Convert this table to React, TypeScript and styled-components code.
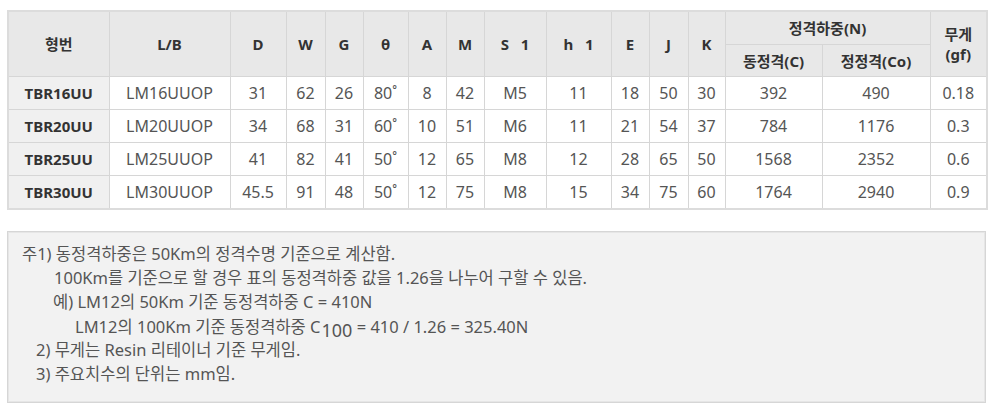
import React from "react";
import styled, { createGlobalStyle } from "styled-components";

const Global = createGlobalStyle`
  html, body { margin: 0; padding: 0; background: #fff; }
  body { font-family: "Noto Sans", "Noto Sans CJK KR", sans-serif; color: #444; }
`;

const Page = styled.div`
  padding: 10px 14px 0 7px;
  width: 979px;
  display: flex;
  flex-direction: column;
  gap: 21px;
`;

const Table = styled.table`
  width: 979px;
  border-collapse: collapse;
  table-layout: fixed;
  border: 2px solid #dcdcdc;
  font-size: 15px;
`;

const Th = styled.th<{ $h?: number }>`
  background: #e8e8e8;
  border: 1px solid #d6d6d6;
  font-weight: 700;
  color: #333;
  text-align: center;
  padding: 0;
  height: ${(p) => (p.$h ? p.$h : 31)}px;
  line-height: 20px;
  white-space: pre;
`;

const Td = styled.td<{ $head?: boolean }>`
  border: 1px solid #d6d6d6;
  text-align: center;
  padding: 0;
  height: 32px;
  line-height: 20px;
  font-size: ${(p) => (p.$head ? 15 : 16)}px;
  color: ${(p) => (p.$head ? "#333" : "#555")};
  font-weight: ${(p) => (p.$head ? 700 : 400)};
  background: ${(p) => (p.$head ? "#f0f0f0" : "#fff")};
`;

const Note = styled.div`
  box-sizing: border-box;
  width: 979px;
  height: 172px;
  background: #f2f2f2;
  border: 1px solid #d6d6d6;
  box-shadow: inset 0 0 0 1px #e6e6e6;
  padding: 10px 0 0 14px;
  font-size: 16.5px;
  color: #555;
`;

const Line = styled.div<{ $indent: number }>`
  padding-left: ${(p) => p.$indent}px;
  height: 24px;
  line-height: 24px;
  white-space: pre;
`;

const Sub = styled.span`
  font-size: 18px;
  position: relative;
  top: 4px;
  margin-left: 1px;
`;

const widths = [101, 121, 56, 39, 38, 45, 38, 38, 62, 65, 38, 39, 37, 97, 108, 57];

const rows = [
  ["TBR16UU", "LM16UUOP", "31", "62", "26", "80˚", "8", "42", "M5", "11", "18", "50", "30", "392", "490", "0.18"],
  ["TBR20UU", "LM20UUOP", "34", "68", "31", "60˚", "10", "51", "M6", "11", "21", "54", "37", "784", "1176", "0.3"],
  ["TBR25UU", "LM25UUOP", "41", "82", "41", "50˚", "12", "65", "M8", "12", "28", "65", "50", "1568", "2352", "0.6"],
  ["TBR30UU", "LM30UUOP", "45.5", "91", "48", "50˚", "12", "75", "M8", "15", "34", "75", "60", "1764", "2940", "0.9"],
];

const heads = ["형번", "L/B", "D", "W", "G", "θ", "A", "M", "S   1", "h   1", "E", "J", "K"];

export default function App() {
  return (
    <>
      <Global />
      <Page>
        <Table>
          <colgroup>
            {widths.map((w, i) => (
              <col key={i} style={{ width: w }} />
            ))}
          </colgroup>
          <thead>
            <tr>
              {heads.map((h) => (
                <Th key={h} rowSpan={2}>
                  {h}
                </Th>
              ))}
              <Th colSpan={2} $h={32}>정격하중(N)</Th>
              <Th rowSpan={2}>{"무게\n(gf)"}</Th>
            </tr>
            <tr>
              <Th $h={31}>동정격(C)</Th>
              <Th $h={31}>정정격(Co)</Th>
            </tr>
          </thead>
          <tbody>
            {rows.map((r) => (
              <tr key={r[0]}>
                {r.map((c, i) => (
                  <Td key={i} $head={i === 0}>
                    {c}
                  </Td>
                ))}
              </tr>
            ))}
          </tbody>
        </Table>
        <Note>
          <Line $indent={0}>주1) 동정격하중은 50Km의 정격수명 기준으로 계산함.</Line>
          <Line $indent={32}>100Km를 기준으로 할 경우 표의 동정격하중 값을 1.26을 나누어 구할 수 있음.</Line>
          <Line $indent={31}>예) LM12의 50Km 기준 동정격하중 C = 410N</Line>
          <Line $indent={53}>
            LM12의 100Km 기준 동정격하중 C<Sub>100</Sub> = 410 / 1.26 = 325.40N
          </Line>
          <Line $indent={14}>2) 무게는 Resin 리테이너 기준 무게임.</Line>
          <Line $indent={14}>3) 주요치수의 단위는 mm임.</Line>
        </Note>
      </Page>
    </>
  );
}
